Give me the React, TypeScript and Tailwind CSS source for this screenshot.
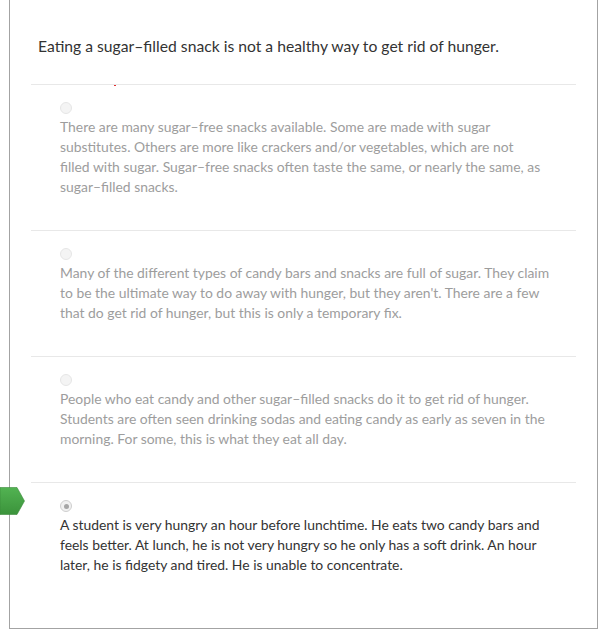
import React from "react";

type Choice = {
  lines: string[];
  selected?: boolean;
};

// lines kept as in the source so the wrap matches
const choices: Choice[] = [
  {
    lines: [
      "There are many sugar–free snacks available. Some are made with sugar",
      "substitutes. Others are more like crackers and/or vegetables, which are not",
      "filled with sugar. Sugar–free snacks often taste the same, or nearly the same, as",
      "sugar–filled snacks.",
    ],
  },
  {
    lines: [
      "Many of the different types of candy bars and snacks are full of sugar. They claim",
      "to be the ultimate way to do away with hunger, but they aren't. There are a few",
      "that do get rid of hunger, but this is only a temporary fix.",
    ],
  },
  {
    lines: [
      "People who eat candy and other sugar–filled snacks do it to get rid of hunger.",
      "Students are often seen drinking sodas and eating candy as early as seven in the",
      "morning. For some, this is what they eat all day.",
    ],
  },
  {
    lines: [
      "A student is very hungry an hour before lunchtime. He eats two candy bars and",
      "feels better. At lunch, he is not very hungry so he only has a soft drink. An hour",
      "later, he is fidgety and tired. He is unable to concentrate.",
    ],
    selected: true,
  },
];

const Radio = ({ checked }: { checked?: boolean }) => (
  <span
    className={`flex h-[12px] w-[12px] items-center justify-center rounded-full border ${
      checked ? "border-[#cfcfcf] bg-[#f1f1f1]" : "border-[#e6e6e6] bg-[#f4f4f4]"
    }`}
  >
    {checked && <span className="h-[5px] w-[5px] rounded-full bg-[#a6a6a6]" />}
  </span>
);

const CorrectTag = () => (
  <svg
    className="absolute left-0 top-[487px]"
    width="25"
    height="28"
    viewBox="0 0 25 28"
  >
    <defs>
      <linearGradient id="tagGreen" x1="0" y1="0" x2="0" y2="1">
        <stop offset="0" stopColor="#52b352" />
        <stop offset="1" stopColor="#3b933b" />
      </linearGradient>
    </defs>
    <path d="M0 0.5 H17 L24.5 14 L17 27.5 H0 Z" fill="url(#tagGreen)" stroke="#3a8a3a" strokeWidth="0.6" />
  </svg>
);

export default function App() {
  return (
    <div className="relative h-[631px] w-[612px] bg-white font-['Lato','Noto_Sans',sans-serif]">
      <div className="ml-[9px] flex h-[629px] w-[589px] flex-col border-x border-b border-[#a3a3a3] px-[21px]">
        <div className="pb-[26px] pl-[7px] pt-[34px] text-[15.7px] leading-[24px] text-[#333333]">
          Eating a sugar–filled snack is not a healthy way to get rid of hunger.
        </div>
        {choices.map((c, i) => (
          <div
            key={i}
            className="border-t border-[#e8e8e8] pb-[33px] pl-[29px] pt-[17px]"
          >
            <Radio checked={c.selected} />
            <p
              className={`mt-[3px] whitespace-nowrap text-[13.9px] leading-[20px] ${
                c.selected ? "text-[#333333]" : "text-[#9d9d9d]"
              }`}
            >
              {c.lines.map((l, j) => (
                <span key={j} className="block">
                  {l}
                </span>
              ))}
            </p>
          </div>
        ))}
      </div>
      <span className="absolute left-[114px] top-[85px] h-[1px] w-[2px] bg-[#e03030]" />
      <CorrectTag />
    </div>
  );
}
